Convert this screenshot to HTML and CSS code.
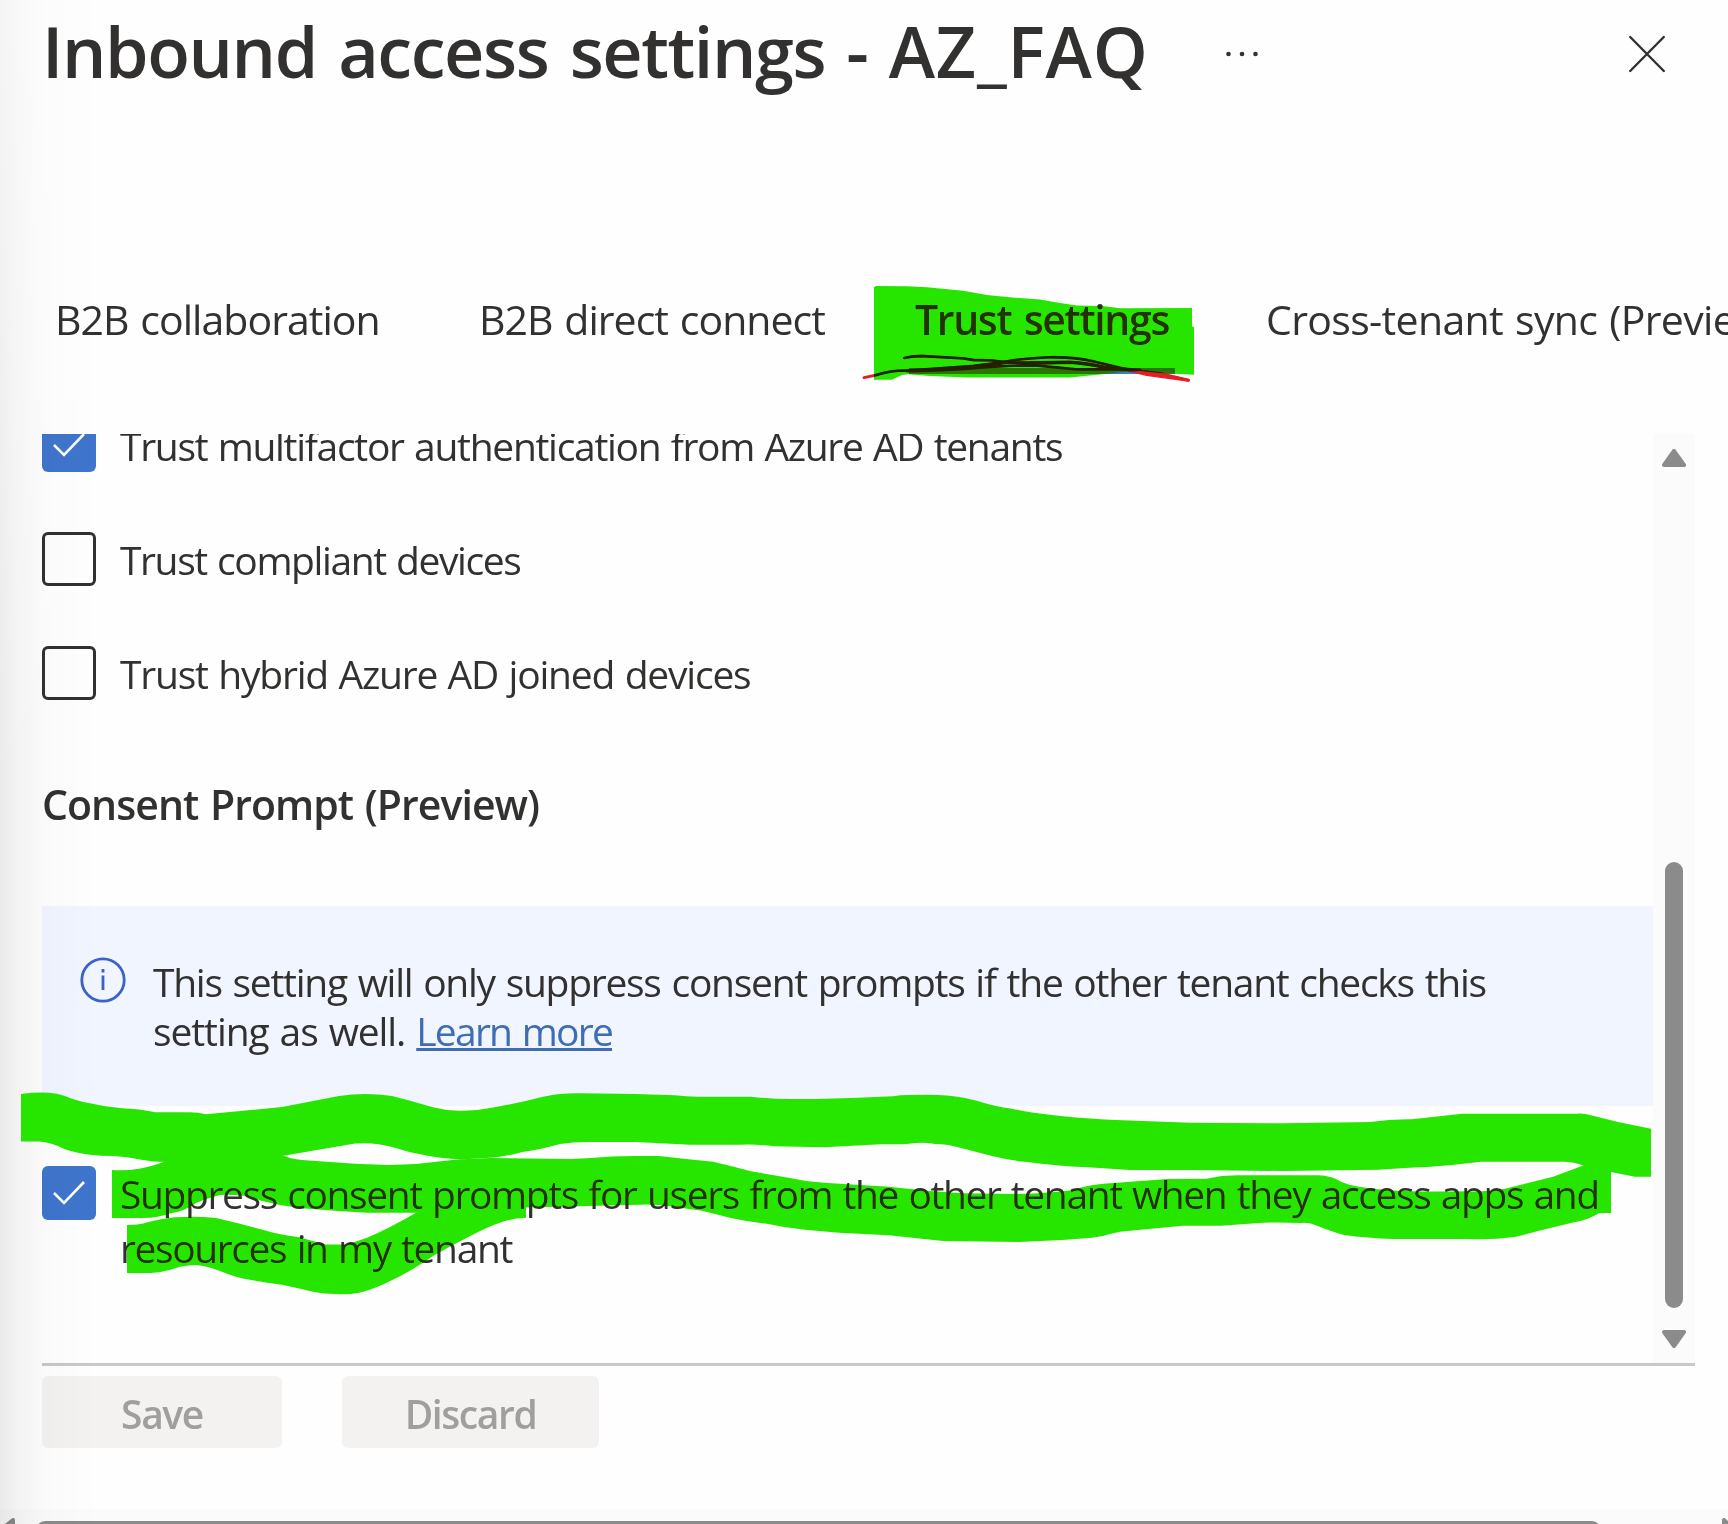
FILE: index.html
```
<!DOCTYPE html>
<html lang="en">
<head>
<meta charset="utf-8">
<title>Inbound access settings</title>
<link rel="stylesheet" href="styles.css">
</head>
<body>
<div class="blade">
  <header class="blade-header">
    <h1 class="title">Inbound access settings - <span class="policy">AZ_FAQ</span></h1>
    <svg class="more" width="32" height="8" viewBox="0 0 32 8"><circle cx="2.5" cy="4" r="2.3"/><circle cx="16" cy="4" r="2.3"/><circle cx="29.5" cy="4" r="2.3"/></svg>
    <svg class="close" width="38" height="38" viewBox="0 0 38 38"><path d="M2.2 2L35.8 36M35.8 2L2.2 36"/></svg>
  </header>
  <nav class="tabs">
    <a class="tab collaboration">B2B collaboration</a>
    <a class="tab connect">B2B direct connect</a>
    <a class="tab active">Trust settings</a>
    <a class="tab sync">Cross-tenant sync (Preview)</a>
  </nav>
  <div class="scroller">
    <main class="content">
      <label class="option first">
        <span class="box checked"><svg width="54" height="54" viewBox="0 0 54 54"><path d="M12 27L22 37L42 16"/></svg></span>
        <span class="label">Trust multifactor authentication from Azure AD tenants</span>
      </label>
      <label class="option">
        <span class="box"></span>
        <span class="label compliant">Trust compliant devices</span>
      </label>
      <label class="option">
        <span class="box"></span>
        <span class="label hybrid">Trust hybrid Azure AD joined devices</span>
      </label>
      <h2 class="section">Consent Prompt (Preview)</h2>
      <div class="info">
        <svg class="info-icon" width="46" height="46" viewBox="0 0 46 46"><circle cx="23" cy="23" r="21.2"/><path d="M23 18.5V33M23 12V15.5"/></svg>
        <p class="info-text">This setting will only suppress consent prompts if the other tenant checks this<br><span class="second">setting as well. </span><a class="link">Learn more</a></p>
      </div>
      <label class="option last">
        <span class="box checked"><svg width="54" height="54" viewBox="0 0 54 54"><path d="M12 27L22 37L42 16"/></svg></span>
        <span class="label two">Suppress consent prompts for users from the other tenant when they access apps and<br>resources in my tenant</span>
      </label>
    </main>
    <div class="track">
      <svg width="24" height="18" viewBox="0 0 24 18"><path d="M12 2L22 16H2Z"/></svg>
      <div class="thumb"></div>
      <svg width="24" height="18" viewBox="0 0 24 18"><path d="M12 16L22 2H2Z"/></svg>
    </div>
  </div>
  <footer class="actions">
    <button class="btn save">Save</button>
    <button class="btn discard">Discard</button>
  </footer>
  <div class="hscroll">
    <svg width="15" height="15" viewBox="0 0 15 15"><path d="M2 10L12 2V14Z"/></svg>
    <div class="hthumb"></div>
    <svg class="right" width="15" height="15" viewBox="0 0 15 15"><path d="M12 10L3 2V14Z"/></svg>
  </div>
</div>
<div class="edge-shadow"></div>
<!-- pen strokes, then the green highlighter over them -->
<svg class="pen" width="1728" height="1524" viewBox="0 0 1728 1524">
  <g transform="translate(840 260) scale(.33333)">
    <path d="M72 353Q105 347 135 338Q165 331 210 331Q290 326 400 318Q450 312 500 304Q560 294 620 292Q700 290 760 304L860 328"/>
    <path d="M193 294Q215 288 245 288L370 295L400 300L455 301L500 307L580 311L690 308Q740 312 780 320L860 328"/>
    <path d="M200 333Q330 332 420 323Q520 315 590 317Q650 322 710 328L860 328L920 336L1046 361"/>
    <path d="M270 328Q400 326 500 308L690 306Q750 310 800 323L900 330"/>
    <path class="tail" d="M850 328L900 331L960 338L1046 358L1046 363L985 355L920 346L880 336Z"/>
  </g>
</svg>
<svg class="marker" width="1728" height="1524" viewBox="0 0 1728 1524">
  <path d="M874 287L876 286L907 286.300L927 287.300L963 290.700L987 295L1012 297.500L1040 299.500L1060 303L1077 305.500L1102 306L1120 308.300L1192 308V326.700H1194V374.700L1160 373L1140 371L1120 372.300L1100 374.500L1070 377.500H967L930 376L908 374.300L902 375L892 379.700H874Z"/>
  <path d="M21 1094Q35 1092 49 1092.700Q57 1093 65 1096Q76 1101 90 1103.300Q105 1107 122 1108.300Q140 1109 155 1112.300H188Q197 1112 206 1114.300L282 1107L339 1096Q365 1092 392 1096Q412 1101 433 1107.300Q447 1111 461 1110.700Q475 1111 490 1108Q515 1104 543 1096.700Q560 1093 580 1093.300L636 1094L675 1095.300Q688 1097 702 1096.700H751Q770 1099 790 1099H816L858 1097.700L893 1096.300Q902 1094.500 912 1095Q932 1094 950 1095.700Q964 1097 977 1100.700Q992 1106 1012 1108.700Q1030 1113 1054 1115.300Q1085 1119 1123 1120.300L1191 1122.700L1283 1123.300L1370 1122Q1390 1119 1412 1119.300L1462 1113.700H1576Q1584 1113 1591 1115.300L1618 1122L1651 1128.700V1176.700H1635L1611 1172L1584 1166Q1575 1162 1565 1161.700H1481Q1455 1165 1427 1167Q1400 1168 1378 1169.700L1283 1171L1191 1170H1130L1088 1167.300Q1055 1166 1027 1162Q1008 1160 992 1156L962 1148.300Q948 1144 935 1144Q925 1142 916 1143L904 1144.300H881L824 1147.300L774 1146.300Q757 1144 740 1144.700H690L636 1142H587Q573 1142 560 1144Q543 1149 522 1152Q505 1157 490 1157.700L461 1159.500Q444 1159 429 1156Q410 1153 392 1147Q375 1142 355 1143.500L282 1156L166 1162Q154 1162 143 1160Q129 1157 114 1156Q101 1156 90 1154.700Q76 1153 65 1149.300Q51 1142 39 1141.500H21Z"/>
  <path d="M112 1170Q126 1171 139 1168.700Q154 1166 166 1161L200 1148L260 1148L282 1155Q290 1159 302 1160L355 1163.700L388 1165L416 1164L457 1159.500L490 1158L571 1159L591 1158Q612 1156 633 1156H659Q685 1159 713 1161.700Q732 1166 751 1171.300L790 1178Q807 1182 824 1182.700L889 1186.700Q925 1191 962 1193.300L1019 1194Q1050 1193 1073 1190Q1087 1185 1103 1183.700L1168 1179L1206 1178.700Q1223 1175 1240 1175.300H1317Q1326 1175 1336 1179Q1346 1185 1359 1186.700Q1378 1190 1397 1190.700Q1431 1192 1466 1191.300Q1487 1192 1504 1189L1553 1176.700L1584 1165.300L1611 1160V1213H1599Q1589 1220 1572 1222.700L1542 1230L1515 1237Q1490 1240 1466 1239H1393Q1367 1238 1344 1235Q1333 1232 1317 1225.700Q1309 1222 1301 1223Q1280 1222 1263 1222.700L1221 1225.700H1183L1130 1230.700Q1120 1231 1110 1234Q1102 1237 1092 1237.700Q1056 1241 1019 1242L943 1241L889 1235.300L839 1232.700L805 1229.700Q786 1228 767 1223.700Q749 1222 732 1218.300L702 1210.700L682 1208Q661 1204 640 1204.700L526 1207.500L416 1212.700H367Q334 1211 302 1208.300Q281 1206 261 1200.700Q248 1194 220 1195Q208 1198 196 1203Q185 1211 171 1213.300Q158 1218 143 1218H112Z"/>
  <path d="M127 1225Q136 1225 143 1223.500Q158 1219 175 1217.300Q197 1216 216 1218Q238 1223 261 1229.300Q279 1235 298 1237L326 1244.500H347L367 1237.700Q388 1229 416 1212.700L449 1196L526 1200V1217.700Q513 1218 502 1222Q487 1227 469 1236.700Q452 1245 433 1256Q409 1273 384 1284Q371 1290 359 1292.700Q348 1295 335 1294Q324 1294 314 1292Q298 1288 282 1284.700Q267 1283 253 1280.300Q236 1278 220 1271Q207 1266 196 1265Q189 1265 180 1266.700Q166 1272 151 1273H127Z"/>
</svg>
</body>
</html>
```
FILE: styles.css
```
* { box-sizing: border-box; }
body { margin: 0; background: #fefefe; color: #323130; font-family: "Open Sans", sans-serif; font-size: 39px; width: 1728px; height: 1524px; overflow: hidden; position: relative; }
.blade { width: 1728px; height: 1524px; display: flex; flex-direction: column; overflow: hidden; white-space: nowrap; }

.blade-header { height: 299px; flex: none; display: flex; align-items: flex-start; padding-left: 42px; }
.title { margin: 0; font-size: 70px; line-height: 103px; font-weight: 600; width: 1184px; letter-spacing: -1.4px; word-spacing: 4.5px; }
.policy { letter-spacing: .8px; }
.more { margin-top: 50px; fill: #323130; }
.close { margin: 35px 0 0 370px; fill: none; stroke: #323130; stroke-width: 2.4; stroke-linecap: round; }

.tabs { height: 135px; flex: none; display: flex; padding-left: 55px; font-size: 41px; line-height: 40px; }
.tab { flex: none; height: 75px; letter-spacing: -.95px; word-spacing: 2px; }
.collaboration { width: 424px; }
.connect { width: 430px; }
.active { width: 266px; margin-right: 91px; padding-left: 6px; font-weight: 600; letter-spacing: -1.35px; word-spacing: 3px; border-bottom: 6px solid #3f78d0; }
.sync { letter-spacing: -.65px; }

.scroller { height: 932px; flex: none; margin: 0 33px 0 42px; display: flex; border-bottom: 3px solid #c8c8c8; overflow: hidden; }
.content { width: 1611px; display: flex; flex-direction: column; overflow: hidden; }
.option { display: flex; gap: 24px; height: 54px; flex: none; margin-bottom: 60px; }
.first { margin-top: -16px; }
.box { width: 54px; height: 54px; flex: none; border: 3px solid #323130; border-radius: 6px; }
.checked { border: 0; background: #3f75cc; }
.checked svg { display: block; fill: none; stroke: #fff; stroke-width: 2.6; }
.label { line-height: 56px; letter-spacing: -1.3px; word-spacing: 1.5px; }
.compliant { letter-spacing: -1.4px; }
.hybrid { letter-spacing: -1.2px; }
.section { margin: 16px 0 0; height: 130px; flex: none; font-size: 41px; line-height: 57px; font-weight: 600; letter-spacing: -.95px; word-spacing: 2px; }

.info { height: 200px; flex: none; background: #f0f5ff; display: flex; padding: 51px 0 0 38px; }
.info-icon { fill: none; stroke: #3a62c8; stroke-width: 2.8; flex: none; }
.info-text { margin: 0 0 0 27px; line-height: 49px; letter-spacing: -1.28px; word-spacing: 2px; }
.second { letter-spacing: -1.1px; }
.link { color: #3f6cb5; text-decoration: underline; text-decoration-thickness: 3px; letter-spacing: -1.75px; }
.last { margin: 60px 0 0; }
.two { line-height: 54px; margin-top: 1px; letter-spacing: -1.4px; word-spacing: 1.6px; }

.track { width: 42px; background: #fbfbfb; display: flex; flex-direction: column; align-items: center; padding: 15px 0; }
.track svg, .hscroll svg { fill: #8b8b8b; stroke: #8b8b8b; stroke-width: 4; stroke-linejoin: round; flex: none; }
.thumb { width: 18px; height: 446px; margin: 395px 0 22px; border-radius: 9px; background: #8b8b8b; }

.actions { display: flex; gap: 60px; padding: 10px 0 0 42px; height: 143px; flex: none; }
.btn { height: 72px; border: 0; border-radius: 6px; background: #f3f2f1; color: #a19f9d; font: 600 39px/75px "Open Sans", sans-serif; letter-spacing: -1.4px; padding: 0; }
.save { width: 240px; }
.discard { width: 257px; }

.hscroll { height: 15px; flex: none; background: #fbfbfb; display: flex; align-items: flex-start; padding: 9px 0 0 1px; overflow: hidden; }
.hthumb { width: 1565px; height: 18px; margin: 3px 0 0 20px; flex: none; border-radius: 9px; background: #8b8b8b; }
.right { margin-left: 120px; }

.edge-shadow { position: absolute; left: 0; top: 0; width: 96px; height: 1524px; background: linear-gradient(90deg, rgba(0,0,0,.08), rgba(0,0,0,.042) 18px, rgba(0,0,0,.016) 45px, rgba(0,0,0,0)); -webkit-mask-image: linear-gradient(rgba(0,0,0,.5), #000 800px); mask-image: linear-gradient(rgba(0,0,0,.5), #000 800px); }
.pen, .marker { position: absolute; left: 0; top: 0; }
.pen path { fill: none; stroke: #e31f24; stroke-width: 8.5; stroke-linecap: round; stroke-linejoin: round; }
.pen .tail { fill: #e31f24; stroke-width: 4; }
.marker { fill: #26e600; mix-blend-mode: darken; }
```
